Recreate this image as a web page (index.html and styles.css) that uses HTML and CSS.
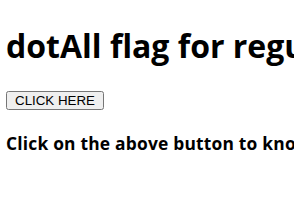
FILE: index.html
```html
<html>
  <head>
    <title>dotAll flag</title>
    <link rel="stylesheet" href="styles.css">
  </head>
  <body>
    <h1>dotAll flag for regular expressions in JavaScript</h1>
    <button type="button" class="btn">CLICK HERE</button>
    <h3 class="result">Click on the above button to know the dotAll flag value</h3>
  </body>
</html>
```

FILE: styles.css
```css
body {
  font-family: "Open Sans", sans-serif;
  white-space: nowrap;
  overflow: hidden;
  margin: 8px 6px;
}
h1 {
  font-size: 32px;
  margin: 16px 0 24px;
}
.btn {
  font-family: "Liberation Sans", Arial, sans-serif;
  font-size: 13.33px;
  padding: 0 7px;
}
.result {
  font-size: 17.4px;
  letter-spacing: 0.2px;
  margin-top: 21px;
}
```
